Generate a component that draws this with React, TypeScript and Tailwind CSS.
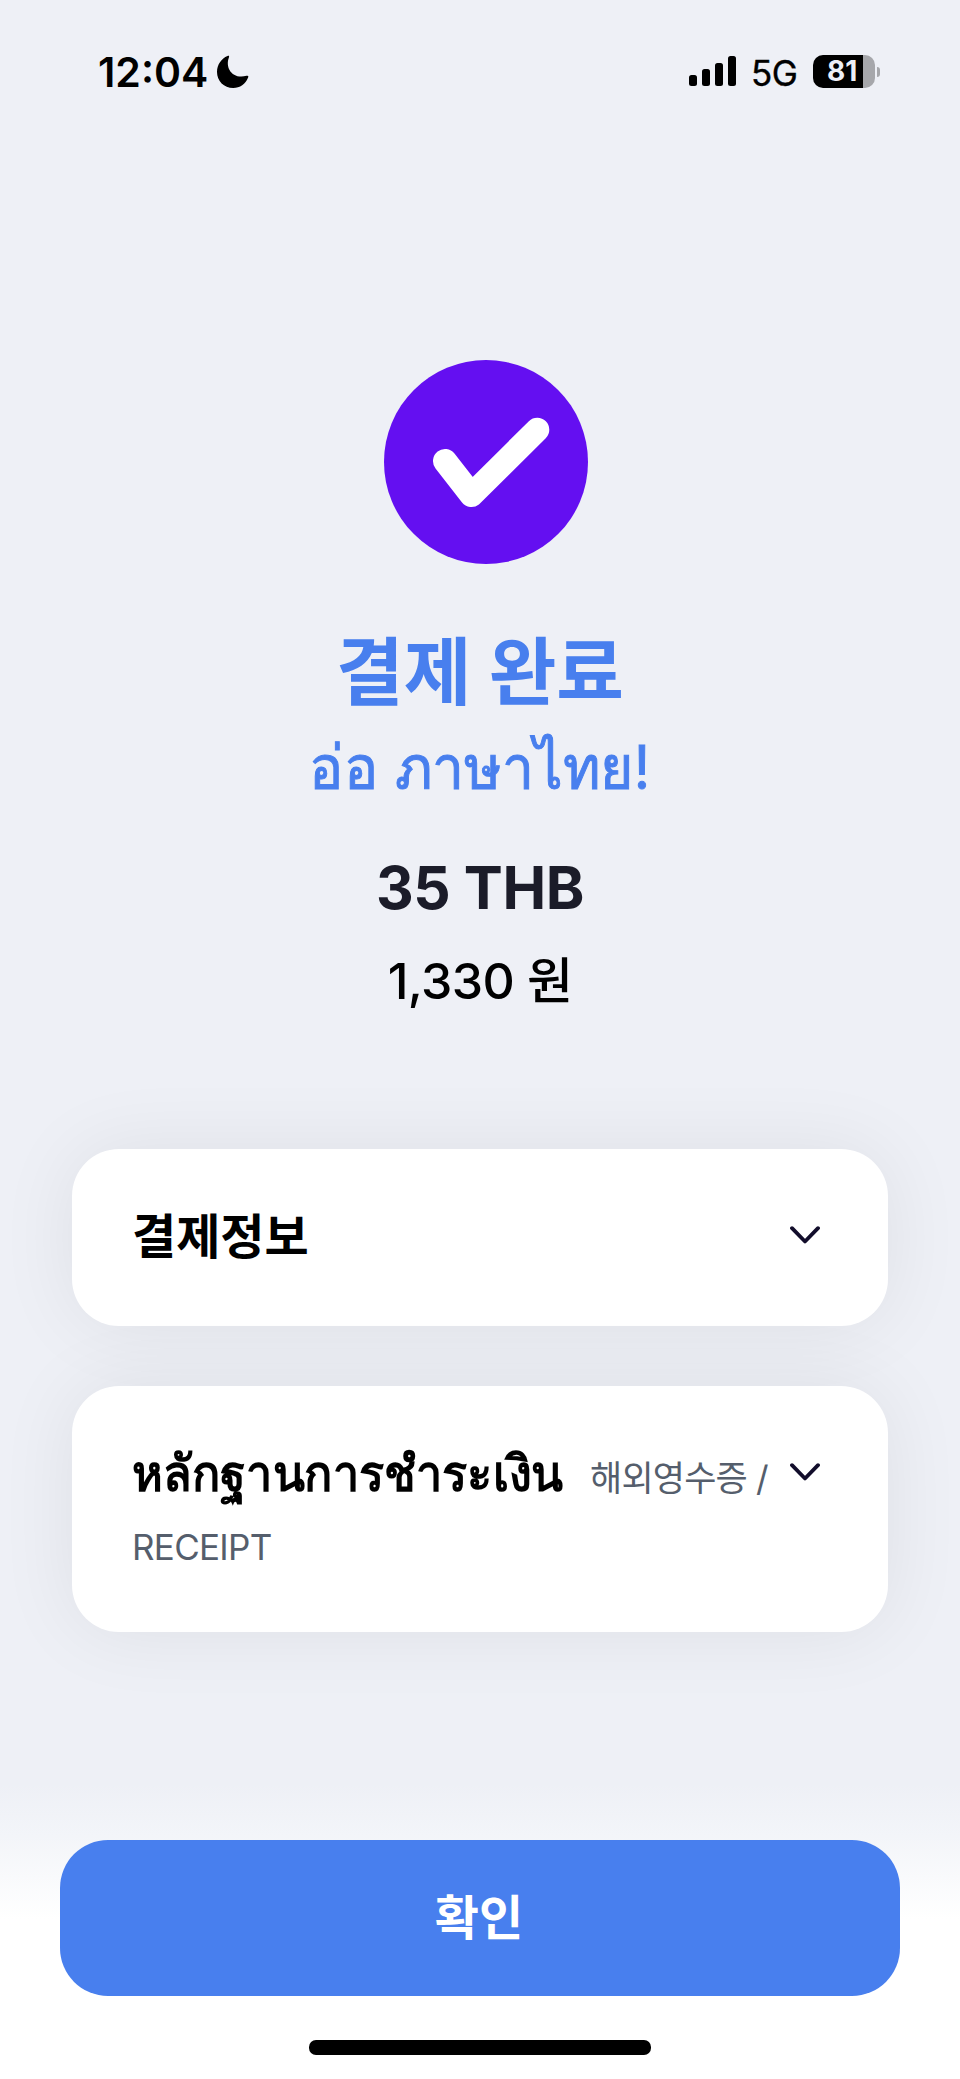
import type { ReactNode } from "react";

function StatusBar() {
  return (
    <header className="flex h-[144px] items-center justify-between pr-[80px] pl-[98px] text-black">
      <div className="flex items-center gap-[8px]">
        <span className="text-[41px] leading-[48px] font-semibold">12:04</span>
        <svg width="34" height="34" viewBox="0 0 34 34" aria-hidden="true">
          <path
            d="M11.5 1C13 .3 13.400 1 12.900 2.400C9 12.500 16 24.500 30.500 20.800C32.300 20.300 32.700 21 32 22.700C29.500 29 24 33 17.200 33C8 33 1 26 1 17C1 9.500 5.500 3.500 11.500 1Z"
            fill="currentColor"
          />
        </svg>
      </div>
      <div className="flex items-center">
        <div className="mb-[2px] flex h-[30px] items-end gap-[5px]">
          <span className="h-[11px] w-[8px] rounded-[2.500px] bg-black" />
          <span className="h-[17px] w-[8px] rounded-[2.500px] bg-black" />
          <span className="h-[23px] w-[8px] rounded-[2.500px] bg-black" />
          <span className="h-[30px] w-[8px] rounded-[2.500px] bg-black" />
        </div>
        <span className="ml-[15px] w-[62px] pt-[1px] text-[35px] leading-[40px] tracking-[-0.5px] [-webkit-text-stroke:0.4px_black]">5G</span>
        <div className="mb-[2px] flex h-[33px] w-[62px] items-center overflow-hidden rounded-[10px] bg-[linear-gradient(to_right,#000_50px,#a6a7ab_50px)]">
          <span className="ml-[14px] pt-[1px] text-[28px] leading-[33px] font-bold text-[#edeff6]">81</span>
        </div>
        <span className="mb-[1px] ml-[2px] h-[10px] w-[3px] rounded-r-full bg-[#a6a7ab]" />
      </div>
    </header>
  );
}

function Chevron() {
  return (
    <svg className="shrink-0" width="30" height="18" viewBox="0 0 30 18" fill="none" aria-hidden="true">
      <path d="M2 2.200 15 15.500 28 2.200" stroke="#120d2b" strokeWidth="3.800" strokeLinecap="round" strokeLinejoin="round" />
    </svg>
  );
}

function Card({ className, children }: { className: string; children: ReactNode }) {
  return (
    <section
      className={`flex items-start justify-between rounded-[47px] bg-white pr-[68px] pl-[60px] shadow-[0_0_80px_rgba(0,0,0,0.07)] ${className}`}
    >
      {children}
    </section>
  );
}

export default function App() {
  return (
    <div className="flex h-[2079px] w-[960px] flex-col overflow-hidden bg-[#eef0f6] font-[Inter,'Noto_Sans_CJK_KR',sans-serif]">
      <StatusBar />
      <main className="flex flex-1 flex-col">
        <svg className="mt-[216px] ml-[384px]" width="204" height="204" viewBox="0 0 204 204" aria-hidden="true">
          <circle cx="102" cy="102" r="102" fill="#640ff1" />
          <path d="M61 101 87.500 135 153.300 69.700" fill="none" stroke="#fff" strokeWidth="24" strokeLinecap="round" strokeLinejoin="round" />
        </svg>
        <div className="flex flex-col items-center text-center whitespace-nowrap">
          <h1 className="mt-[61px] h-[95px] text-[73.500px] leading-[96px] font-bold text-[#487fee]">결제 완료</h1>
          <p className="h-[96px] origin-center scale-x-[0.937] text-[61px] leading-[94px] text-[#487fee] [-webkit-text-stroke:1px_#487fee]">อ่อ ภาษาไทย!</p>
          <p className="mt-[36px] h-[72px] text-[58.500px] leading-[72px] font-bold tracking-[-0.400px] text-[#1b1c29]">35 THB</p>
          <p className="mt-[27px] h-[60px] text-[50px] leading-[60px] font-medium tracking-[-0.600px] text-black">1,330 원</p>
        </div>
        <div className="mx-[72px] mt-[138px] flex flex-col gap-[60px]">
          <Card className="h-[177px] pt-[53px]">
            <h2 className="text-[48px] leading-[70px] font-bold text-black">결제정보</h2>
            <div className="pt-[24px]">
              <Chevron />
            </div>
          </Card>
          <Card className="h-[246px] pt-[51px]">
            <div>
              <div className="flex items-baseline whitespace-nowrap">
                <h2 className="w-[458px] origin-left scale-x-[0.937] text-[50px] leading-[72px] font-bold text-black">หลักฐานการชำระเงิน</h2>
                <span className="text-[35px] leading-[72px] tracking-[-0.800px] text-[#555e6c]">해외영수증 /</span>
              </div>
              <p className="-mt-[3px] text-[35px] leading-[72px] tracking-[-0.700px] text-[#555e6c]">RECEIPT</p>
            </div>
            <div className="pt-[26px]">
              <Chevron />
            </div>
          </Card>
        </div>
      </main>
      <footer className="flex h-[305px] shrink-0 flex-col items-center bg-[linear-gradient(to_bottom,#eef0f600_10px,#f3f5f9_62px,#fff_145px)] pt-[66px]">
        <button className="h-[156px] w-[840px] rounded-[48px] bg-[#487fee] text-[48px] leading-[70px] font-bold text-white">
          <span className="mr-[2px]">확인</span>
        </button>
        <div className="mt-[44px] h-[15px] w-[342px] rounded-[7px] bg-black" />
      </footer>
    </div>
  );
}
